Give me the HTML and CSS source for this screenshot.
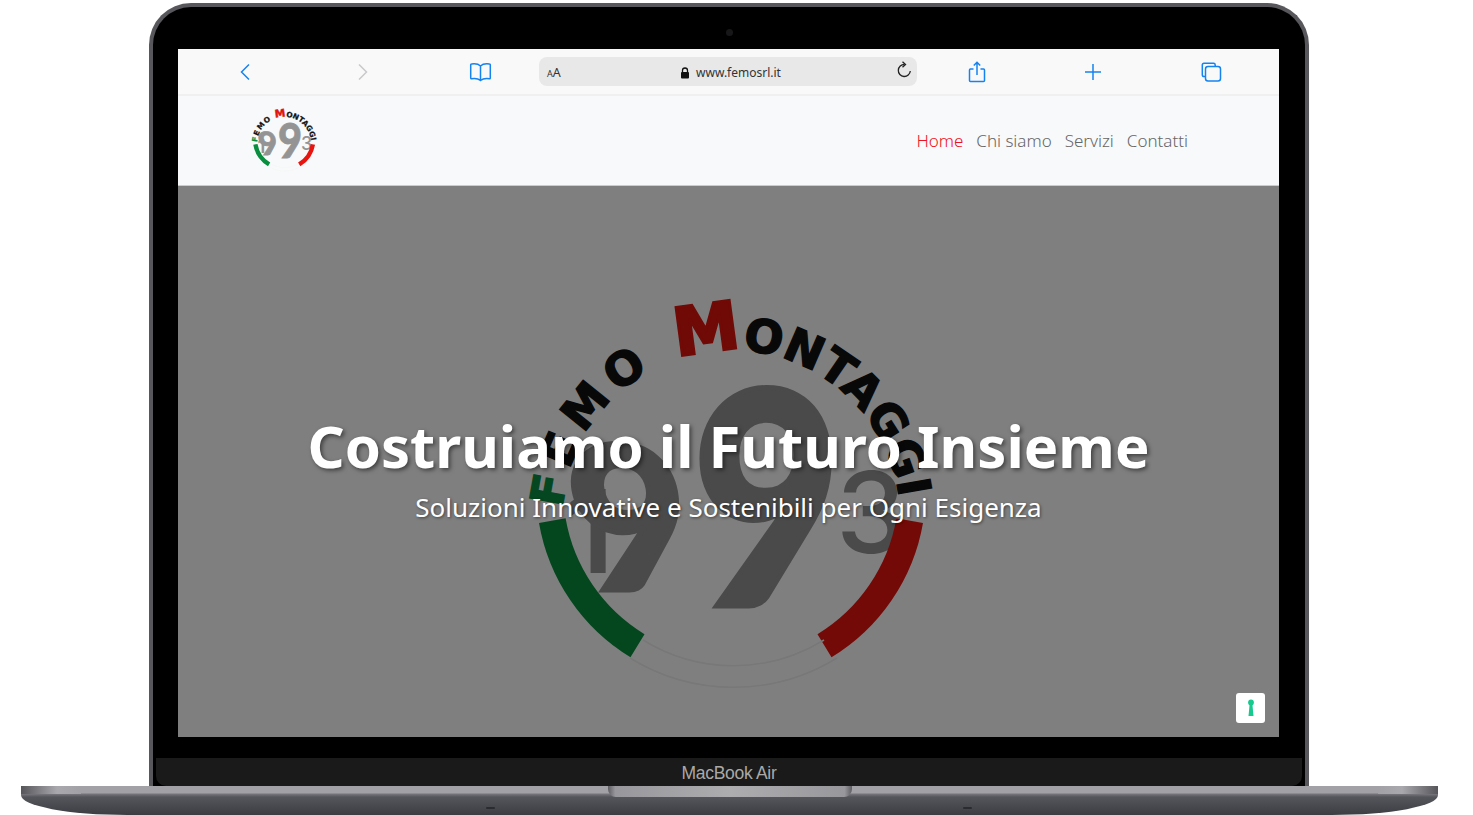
FILE: index.html
```html
<!DOCTYPE html>
<html lang="en">
<head>
    <meta charset="UTF-8">
    <meta name="viewport" content="width=device-width, initial-scale=1.0">
    <title>Femo Montaggi</title>
    <link rel="stylesheet" href="styles.css">
</head>
<body>
    <svg class="defs" width="0" height="0">
        <symbol id="femoLogo" viewBox="520 295 420 410">
            <!-- 1993 -->
            <text class="logo-digit logo-one" x="565" y="573" font-size="116">1</text>
            <text class="logo-digit" transform="translate(584 590) skewX(10) scale(1 .98)" font-size="204">9</text>
            <text class="logo-digit" transform="translate(692 606) scale(.85 .98)" font-size="304">9</text>
            <text class="logo-digit logo-three" x="836" y="553" font-size="112">3</text>
            <!-- name around the top -->
            <path id="logoArc" d="M 563 508 A 168 168 0 0 1 900 530" fill="none"/>
            <text class="logo-name">
                <textPath href="#logoArc"><tspan class="logo-first"><tspan class="logo-f">F</tspan>EMO </tspan><tspan class="logo-m">M</tspan>ONTAGGI</textPath>
            </text>
            <!-- tricolore ring -->
            <path class="ring-green" d="M 552.3 520.6 A 183 183 0 0 0 637.5 645.7"/>
            <path class="ring-red" d="M 909.7 520.6 A 183 183 0 0 1 824.5 645.7"/>
            <path class="ring-white" d="M 630 658 A 197.6 197.6 0 0 0 837 658"/>
            <path class="ring-white" d="M 643 640 A 172 172 0 0 0 824 640"/>
        </symbol>
    </svg>

    <div class="laptop">
        <div class="lid">
            <div class="camera"></div>
            <div class="screen">
                <div class="toolbar">
                    <div class="tool tool-back">
                        <svg width="12" height="18" viewBox="0 0 12 18"><path d="M10 1.500 2.500 9l7.500 7.500" class="ico"/></svg>
                    </div>
                    <div class="tool">
                        <svg width="12" height="18" viewBox="0 0 12 18"><path d="M2 1.500 9.500 9 2 16.500" class="ico ico-off"/></svg>
                    </div>
                    <div class="tool tool-book">
                        <svg width="23" height="20" viewBox="0 0 23 20"><path d="M11.500 4C9.500 2 6 1.500 2.500 2 2 2 1.700 2.300 1.700 2.800V16c0 .5.300.8.800.8 3.500-.5 7 0 9 1.700 2-1.700 5.500-2.200 9-1.700.5 0 .8-.3.8-.8V2.800c0-.5-.3-.8-.8-.8-3.500-.5-7 0-9 2ZM11.500 4V18.500" class="ico"/></svg>
                    </div>
                    <div class="url-bar">
                        <span class="url-aa"><small>A</small>A</span>
                        <span class="url-host">
                            <svg width="10" height="12" viewBox="0 0 10 12"><path d="M2.500 5.500V3.500a2.500 2.500 0 0 1 5 0v2" fill="none" stroke="#111" stroke-width="1.300"/><rect x="1" y="5" width="8" height="6.500" rx="1" fill="#111"/></svg>
                            www.femosrl.it
                        </span>
                        <svg class="url-reload" width="16" height="19" viewBox="0 0 16 19"><path d="M8.500 3.500a6 6 0 1 0 5.800 6.500" fill="none" stroke="#222" stroke-width="1.300"/><path d="M6.500 .8 9.500 3.500 6.500 6.200" fill="none" stroke="#222" stroke-width="1.300"/></svg>
                    </div>
                    <div class="tool">
                        <svg width="18" height="22" viewBox="0 0 18 22"><path d="M5.500 8H2.500C1.700 8 1.500 8.300 1.500 9V19.500C1.500 20.200 1.800 20.500 2.500 20.500H15.500C16.200 20.500 16.500 20.200 16.500 19.500V9C16.500 8.300 16.200 8 15.500 8H12.500M9 14V1.500M5.800 4.500 9 1.300 12.200 4.500" class="ico"/></svg>
                    </div>
                    <div class="tool tool-plus">
                        <svg width="18" height="18" viewBox="0 0 18 18"><path d="M9 1V17M1 9H17" class="ico"/></svg>
                    </div>
                    <div class="tool tool-tabs">
                        <svg width="21" height="20" viewBox="0 0 21 20"><path d="M4 14.500H3C1.800 14.500 1.300 14 1.300 12.800V3C1.300 1.800 1.800 1.300 3 1.300H12.500C13.700 1.300 14.200 1.800 14.200 3V4" class="ico"/><rect x="4.500" y="4.500" width="15" height="14.500" rx="2.500" class="ico"/></svg>
                    </div>
                </div>

                <nav class="site-nav">
                    <svg class="nav-logo" width="68" height="66"><use href="#femoLogo"/></svg>
                    <ul class="nav-links">
                        <li><a class="active" href="#">Home</a></li>
                        <li><a href="#">Chi siamo</a></li>
                        <li><a href="#">Servizi</a></li>
                        <li><a href="#">Contatti</a></li>
                    </ul>
                </nav>

                <section class="hero">
                    <svg class="hero-logo" width="420" height="410"><use href="#femoLogo"/></svg>
                    <div class="hero-shade"></div>
                    <div class="hero-text">
                        <h1>Costruiamo il Futuro Insieme</h1>
                        <p>Soluzioni Innovative e Sostenibili per Ogni Esigenza</p>
                    </div>
                    <div class="key-badge">
                        <svg width="10" height="18" viewBox="0 0 10 18"><circle cx="5" cy="3.500" r="2.900" fill="#17c98e"/><path d="M3.700 4.500H6.300L7.500 17H2.500Z" fill="#17c98e"/></svg>
                    </div>
                </section>
            </div>
            <div class="chin">MacBook Air</div>
        </div>
        <div class="base">
            <div class="notch"></div>
            <span class="foot foot-left"></span>
            <span class="foot foot-right"></span>
        </div>
    </div>
</body>
</html>
```

FILE: styles.css
```css
/* Basic Reset */
* {
    margin: 0;
    padding: 0;
    box-sizing: border-box;
}
html, body {
    height: 815px;
    overflow: hidden;
}
body {
    background-color: #fff;
    font-family: "Noto Sans", sans-serif;
    color: #333;
}
.defs {
    position: absolute;
}

/* Laptop frame */
.laptop {
    padding-top: 3px;
}
.lid {
    position: relative;
    width: 1160px;
    height: 783px;
    margin-left: 149px;
    padding: 42px 25px 0;
    background-color: #000;
    border: 4px solid #58585c;
    border-bottom: none;
    border-radius: 42px 42px 0 0;
}
.camera {
    position: absolute;
    top: 22px;
    left: 573px;
    width: 7px;
    height: 7px;
    border-radius: 50%;
    background-color: #17171a;
}
.screen {
    width: 1101px;
    height: 688px;
    display: flex;
    flex-direction: column;
    background-color: #fff;
}
.chin {
    height: 28px;
    margin: 21px -22px 0 -22px;
    background-color: #1a1a1a;
    border-radius: 0 0 10px 10px;
    color: #a9a9a9;
    font-family: "Liberation Sans", sans-serif;
    font-size: 17.500px;
    line-height: 30px;
    text-align: center;
    letter-spacing: -0.3px;
}
.base {
    position: relative;
    width: 1417px;
    height: 29px;
    margin-left: 21px;
    display: flex;
    justify-content: center;
    background: linear-gradient(#a1a1a6 0, #a1a1a6 7px, #76767c 8px, #55565c 11px, #3c3d42 29px);
    border-radius: 0 0 106px 106px / 0 0 20px 20px;
    overflow: hidden;
}
.base::before,
.base::after {
    content: "";
    position: absolute;
    top: 0;
    width: 60px;
    height: 8px;
}
.base::before {
    left: 0;
    background: linear-gradient(to right, #55555a, #a9a9ad 60%, #a1a1a6);
}
.base::after {
    right: 0;
    background: linear-gradient(to left, #55555a, #a9a9ad 60%, #a1a1a6);
}
.notch {
    width: 244px;
    height: 11px;
    background: linear-gradient(to right, #5e5e62, #98989c 3%, #adadb0 50%, #98989c 97%, #5e5e62);
    border-radius: 0 0 8px 8px;
}
.foot {
    position: absolute;
    top: 21px;
    width: 9px;
    height: 2px;
    border-radius: 1px;
    background-color: #2a2b30;
}
.foot-left {
    left: 465px;
}
.foot-right {
    left: 942px;
}

/* Safari toolbar */
.toolbar {
    height: 47px;
    flex-shrink: 0;
    display: grid;
    grid-template-columns: repeat(3, 117px) 380px repeat(3, 117px);
    padding-left: 9px;
    align-items: center;
    background-color: #f9f9fa;
    border-bottom: 2px solid #f0f0f1;
}
.tool {
    display: flex;
    justify-content: center;
    align-items: center;
}
.tool-book,
.tool-tabs {
    padding-left: 2px;
}
.tool-back,
.tool-plus {
    padding-right: 1px;
}
.ico {
    fill: none;
    stroke: #1482f0;
    stroke-width: 1.500;
}
.ico-off {
    stroke: #c9c9cb;
}
.url-bar {
    position: relative;
    height: 29px;
    margin-left: 1px;
    width: 378px;
    display: flex;
    align-items: center;
    justify-content: center;
    background-color: #e8e8e8;
    border-radius: 8px;
}
.url-aa {
    position: absolute;
    left: 8px;
    top: 7px;
    font-size: 12.500px;
    color: #333;
}
.url-aa small {
    font-size: 9px;
}
.url-host {
    display: flex;
    align-items: center;
    gap: 6px;
    margin-left: 5px;
    padding-top: 2px;
    font-size: 12px;
    color: #333;
}
.url-reload {
    position: absolute;
    right: 5px;
    top: 4px;
}

/* Site nav */
.site-nav {
    height: 90px;
    flex-shrink: 0;
    display: flex;
    align-items: center;
    justify-content: space-between;
    padding: 0 91px 0 72px;
    background-color: #f8f9fa;
    border-bottom: 1px solid #ccc;
}
.nav-links {
    display: flex;
    gap: 13px;
    list-style: none;
}
.nav-links a {
    font-size: 17px;
    font-weight: 300;
    color: #666;
    text-decoration: none;
}
.nav-links a.active {
    color: #ee1122;
}

/* Logo, shared by nav and hero */
.logo-digit {
    font-family: Lato, sans-serif;
    font-weight: 900;
    fill: #949494;
    stroke: #949494;
    stroke-width: 5;
}
.logo-one {
    font-family: Inter, sans-serif;
    font-weight: 600;
    stroke-width: 0;
}
.logo-three {
    font-family: Inter, sans-serif;
    font-weight: 500;
    stroke-width: 0;
}
.logo-name {
    font-family: "DejaVu Sans", sans-serif;
    font-weight: 700;
    font-size: 46px;
    fill: #111;
    stroke: #111;
    stroke-width: 1.500;
}
.logo-first {
    letter-spacing: 7px;
}
.logo-f {
    fill: #0a8f40;
    stroke: #0a8f40;
}
.logo-m {
    fill: #e0140e;
    stroke: #e0140e;
    stroke-width: 3;
    font-size: 66px;
}
.ring-green,
.ring-red {
    fill: none;
    stroke-width: 27;
}
.ring-green {
    stroke: #088e3e;
}
.ring-red {
    stroke: #e8140f;
}
.ring-white {
    fill: none;
    stroke: #f0f0f0;
    stroke-width: 1.500;
}

/* Hero */
.hero {
    position: relative;
    flex: 1;
    display: flex;
    align-items: center;
    justify-content: center;
    overflow: hidden;
    background-color: #fff;
}
.hero-logo {
    position: absolute;
    left: 342px;
    top: 109px;
}
.hero-shade {
    position: absolute;
    inset: 0;
    background-color: rgba(0, 0, 0, 0.5);
}
.hero-text {
    position: relative;
    margin-top: 11px;
    text-align: center;
    color: #fff;
}
.hero-text h1 {
    font-size: 58px;
    font-weight: 700;
    line-height: 74px;
    text-shadow: 2px 2px 4px rgba(0, 0, 0, 0.5);
}
.hero-text p {
    font-size: 26px;
    font-weight: 400;
    line-height: 36px;
    margin-top: 6px;
    text-shadow: 1px 1px 3px rgba(0, 0, 0, 0.5);
}
.key-badge {
    position: absolute;
    right: 14px;
    bottom: 14px;
    width: 29px;
    height: 30px;
    display: flex;
    align-items: center;
    justify-content: center;
    background-color: #fff;
    border-radius: 3px;
}
```
